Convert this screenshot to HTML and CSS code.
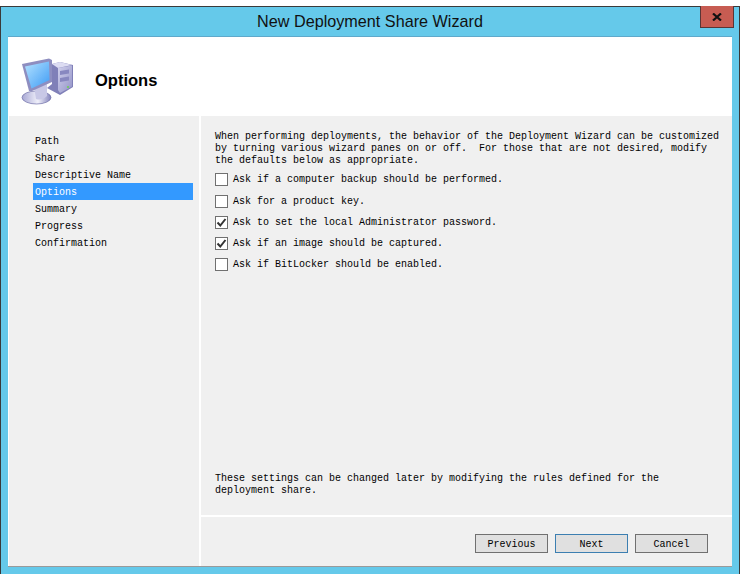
FILE: index.html
```html
<!DOCTYPE html>
<html lang="en">
<head>
<meta charset="utf-8">
<title>New Deployment Share Wizard</title>
<link rel="stylesheet" href="styles.css">
</head>
<body>
<div class="window">
  <div class="titlebar">
    <span class="window-title">New Deployment Share Wizard</span>
    <div class="close"><svg width="10" height="8" viewBox="0 0 10 8"><path d="M1 0.5 L9 7.5 M9 0.5 L1 7.5" stroke="#111" stroke-width="2.2" fill="none"/></svg></div>
  </div>
  <div class="content">
    <header class="header">
      <svg class="computer" width="64" height="62" viewBox="13 48 64 62">
        <defs>
          <linearGradient id="scr" x1="0" y1="0" x2="1" y2="1"><stop offset="0" stop-color="#b4e2ff"/><stop offset="1" stop-color="#3f9cf5"/></linearGradient>
          <linearGradient id="tow" x1="0" y1="0" x2="1" y2="1"><stop offset="0" stop-color="#d0d0ec"/><stop offset="1" stop-color="#9494c8"/></linearGradient>
          <linearGradient id="bas" x1="0" y1="0" x2="1" y2="0"><stop offset="0" stop-color="#a8a8d4"/><stop offset=".55" stop-color="#f0f0fa"/><stop offset="1" stop-color="#8484bc"/></linearGradient>
          <filter id="soft" x="-5%" y="-5%" width="110%" height="110%"><feGaussianBlur stdDeviation=".35"/></filter>
        </defs>
        <g filter="url(#soft)">
          <path d="M52 64 L60 62 L73 65 L73 87 L60 95 L47 88 L52 84 Z" fill="#8080b8"/>
          <path d="M58 68 L72 65.500 L72 86.500 L60 93 L58 90 Z" fill="url(#tow)"/>
          <path d="M52 64 L60 62 L72 65 L58 68 Z" fill="#dcdcf2"/>
          <path d="M60 71 L69 69.500 L69 73.500 L60 75 Z M60 78 L69 76.500 L69 80.500 L60 82 Z" fill="#8888c0"/>
          <circle cx="68" cy="87" r="1.100" fill="#6fd05a"/>
          <ellipse cx="36.500" cy="97.500" rx="14.500" ry="6.500" fill="url(#bas)" stroke="#6e6ea8" stroke-width=".7"/>
          <path d="M34 87 L47 84 L47 96 Q42 101 36 99 Z" fill="#c8c8e6"/>
          <path d="M22 64 L49 58.500 L52 60 L52 82 L32 91 L29 91 Z" fill="#8e8ec0"/>
          <path d="M25 66.500 L49 61.500 L49.500 80 L31.500 88.500 Z" fill="url(#scr)"/>
        </g>
      </svg>
      <h1 class="page-title">Options</h1>
    </header>
    <div class="body">
      <nav class="sidebar">
        <div class="step">Path</div>
        <div class="step">Share</div>
        <div class="step">Descriptive Name</div>
        <div class="step active">Options</div>
        <div class="step">Summary</div>
        <div class="step">Progress</div>
        <div class="step">Confirmation</div>
      </nav>
      <div class="main">
        <section class="pane">
          <p class="text">When performing deployments, the behavior of the Deployment Wizard can be customized<br>by turning various wizard panes on or off.&nbsp; For those that are not desired, modify<br>the defaults below as appropriate.</p>
          <div class="options">
            <div class="option"><span class="box"></span>Ask if a computer backup should be performed.</div>
            <div class="option"><span class="box"></span>Ask for a product key.</div>
            <div class="option"><span class="box"><svg width="11" height="11" viewBox="0 0 11 11"><path d="M1.500 5.500 L4.300 8.500 L9.500 2" stroke="#333" stroke-width="2" fill="none"/></svg></span>Ask to set the local Administrator password.</div>
            <div class="option"><span class="box"><svg width="11" height="11" viewBox="0 0 11 11"><path d="M1.500 5.500 L4.300 8.500 L9.500 2" stroke="#333" stroke-width="2" fill="none"/></svg></span>Ask if an image should be captured.</div>
            <div class="option"><span class="box"></span>Ask if BitLocker should be enabled.</div>
          </div>
          <p class="text note">These settings can be changed later by modifying the rules defined for the<br>deployment share.</p>
        </section>
        <footer class="footer">
          <button class="btn">Previous</button>
          <button class="btn default">Next</button>
          <button class="btn">Cancel</button>
        </footer>
      </div>
    </div>
  </div>
</div>
</body>
</html>
```
FILE: styles.css
```css
* { box-sizing: border-box; }
html, body { margin: 0; padding: 0; background: #fff; }
body { width: 743px; height: 574px; padding-top: 6px; overflow: hidden; font-family: "Liberation Mono", monospace; font-size: 10px; color: #000; }
.window { width: 740px; height: 568px; background: #65c9ea; border: 1px solid #3a3a3a; border-bottom: 0; padding: 0 7px 7px; display: flex; flex-direction: column; }
.titlebar { height: 29px; flex: none; position: relative; display: flex; align-items: center; justify-content: center; }
.window-title { font-family: "Liberation Sans", sans-serif; font-size: 16.200px; color: #111; }
.close { position: absolute; right: -2px; top: -1px; width: 34px; height: 22px; background: #c75c52; border: 1px solid #5a3535; border-top: 0; display: flex; align-items: center; justify-content: center; }
.content { flex: 1; display: flex; flex-direction: column; background: #fff; border-top: 1px solid #5fa9cb; border-bottom: 1px solid #9a9a9a; min-height: 0; }
.header { height: 79px; flex: none; padding: 11px 0 0 5px; display: flex; align-items: flex-start; background: #fff; }
.computer { display: block; flex: none; }
.page-title { margin: 22px 0 0 18px; font-family: "Liberation Sans", sans-serif; font-weight: 700; font-size: 16.500px; line-height: 20px; }
.body { flex: 1; display: flex; min-height: 0; padding-left: 1px; }
.sidebar { width: 190px; flex: none; background: #f0f0f0; padding: 16px 6px 0 24px; }
.step { height: 17px; line-height: 17px; padding: 1px 0 0 2px; white-space: nowrap; }
.step.active { background: #3399ff; color: #fff; }
.main { flex: 1; margin-left: 2px; display: flex; flex-direction: column; min-width: 0; }
.pane { height: 399px; flex: none; background: #f0f0f0; padding: 15px 0 18px 14px; display: flex; flex-direction: column; }
.text { margin: 0; line-height: 12px; white-space: nowrap; }
.options { margin-top: 2px; display: flex; flex-direction: column; }
.option { height: 21px; display: flex; align-items: center; gap: 5px; white-space: nowrap; }
.option:first-child { margin-bottom: 1px; }
.box { width: 13px; height: 13px; flex: none; background: #fff; border: 1px solid #707070; display: flex; align-items: center; justify-content: center; }
.note { margin-top: auto; }
.footer { flex: 1; margin-top: 2px; background: #f0f0f0; display: flex; gap: 7px; justify-content: flex-end; padding: 17px 24px 0 0; align-items: flex-start; }
.btn { width: 73px; height: 19px; padding: 1px 0 0; background: #e0e0e0; border: 1px solid #707070; border-radius: 0; font: inherit; color: #000; }
.btn.default { border-color: #3c7fb1; }
```
